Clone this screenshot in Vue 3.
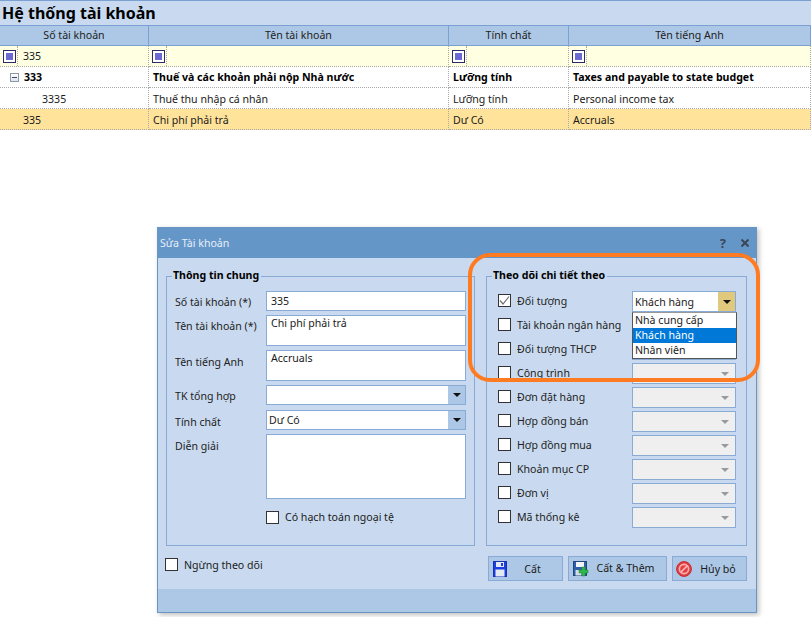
<template>
  <div class="page">
    <h1 class="page-title">Hệ thống tài khoản</h1>

    <div class="grid">
      <div v-for="col in columns" :key="col" class="head-cell">{{ col }}</div>

      <template v-for="(val, i) in filterRow" :key="'f' + i">
        <div class="cell filter-cell">
          <span class="filter-box"><span class="filter-dot"></span></span>
          <span class="filter-val">{{ val }}</span>
        </div>
      </template>

      <template v-for="row in rows" :key="row.code">
        <div class="cell" :class="row.cls">
          <span v-if="row.tree" class="tree-toggle"></span>
          <span :class="row.codeCls">{{ row.code }}</span>
        </div>
        <div class="cell" :class="row.cls">{{ row.name }}</div>
        <div class="cell" :class="row.cls">{{ row.kind }}</div>
        <div class="cell" :class="row.cls">{{ row.english }}</div>
      </template>
    </div>

    <div class="dialog">
      <div class="dialog-title">
        <span>Sửa Tài khoản</span>
        <span class="title-btns">
          <b>?</b>
          <svg width="8" height="8" viewBox="0 0 8 8">
            <path d="M0.5 0.5 L7.5 7.5 M7.5 0.5 L0.5 7.5" stroke="#3c4654" stroke-width="2" />
          </svg>
        </span>
      </div>

      <div class="dialog-body">
        <div class="groups">
          <fieldset class="group left">
            <legend>Thông tin chung</legend>
            <div class="form">
              <label class="h21">Số tài khoản (*)</label>
              <div class="input h21 val-mid">335</div>

              <label class="h31">Tên tài khoản (*)</label>
              <div class="input h31">Chi phí phải trả</div>

              <label class="h31 lbl-mid">Tên tiếng Anh</label>
              <div class="input h31">Accruals</div>

              <label class="h21 extra">TK tổng hợp</label>
              <div class="input h21 combo extra">
                <span></span>
                <span class="arrow-btn"><i class="arrow"></i></span>
              </div>

              <label class="h21 lbl-low">Tính chất</label>
              <div class="input h21 combo">
                <span>Dư Có</span>
                <span class="arrow-btn"><i class="arrow"></i></span>
              </div>

              <label class="h65 lbl-low">Diễn giải</label>
              <div class="input h65"></div>
            </div>
            <div class="foreign-check">
              <span class="check"></span>
              <span>Có hạch toán ngoại tệ</span>
            </div>
          </fieldset>

          <fieldset class="group right">
            <legend>Theo dõi chi tiết theo</legend>
            <div class="track-list">
              <div v-for="(t, i) in tracking" :key="t" class="track-row">
                <span class="check">
                  <svg v-if="i === 0" width="11" height="11" viewBox="0 0 11 11">
                    <path d="M1 5.5 L4 9 L10 1.5" fill="none" stroke="#6f6f6f" stroke-width="1.2" />
                  </svg>
                </span>
                <span class="track-label">{{ t }}</span>
                <div v-if="i === 0" class="track-combo active">
                  <span>Khách hàng</span>
                  <span class="arrow-btn hot"><i class="arrow"></i></span>
                  <ul class="dropdown">
                    <li v-for="o in options" :key="o" :class="{ selected: o === 'Khách hàng' }">{{ o }}</li>
                  </ul>
                </div>
                <div v-else class="track-combo disabled">
                  <i class="arrow grey"></i>
                </div>
              </div>
            </div>
          </fieldset>
        </div>

        <div class="bottom">
          <div class="stop-check">
            <span class="check"></span>
            <span>Ngừng theo dõi</span>
          </div>
          <div class="buttons">
            <button class="btn save">
              <svg width="14" height="16" viewBox="0 0 14 16">
                <rect x="0.5" y="0.5" width="13" height="15" fill="#1c3fe0" stroke="#1a2fb0" />
                <rect x="3" y="1" width="8" height="5" fill="#e4e9f4" />
                <rect x="8" y="2" width="2" height="3" fill="#1c3fe0" />
                <rect x="2.5" y="8.5" width="9" height="7" fill="#e4e8f0" />
              </svg>
              <span>Cất</span>
            </button>
            <button class="btn save-add">
              <svg width="16" height="16" viewBox="0 0 16 16">
                <rect x="0.5" y="0.5" width="13" height="14" fill="#2f5fa8" stroke="#23467c" />
                <rect x="3" y="1" width="8" height="5" fill="#f2f4f8" />
                <rect x="2.5" y="9" width="6" height="5.5" fill="#d4dbe8" />
                <path d="M9 6 h3 v3 h3 v3 h-3 v3 h-3 v-3 h-3 v-3 h3 z" fill="#2fb84a" stroke="#1c8a34" stroke-width="0.5" />
              </svg>
              <span class="raised">Cất &amp; Thêm</span>
            </button>
            <button class="btn cancel">
              <svg width="16" height="16" viewBox="0 0 16 16">
                <circle cx="8" cy="8" r="7.4" fill="#e23f44" stroke="#c02c30" />
                <circle cx="8" cy="8" r="4.6" fill="none" stroke="#f9b0b0" stroke-width="1.6" />
                <path d="M4.8 11.2 L11.2 4.8" stroke="#f9b0b0" stroke-width="1.7" />
              </svg>
              <span>Hủy bỏ</span>
            </button>
          </div>
        </div>
      </div>

      <div class="dialog-footer"></div>
      <div class="highlight"></div>
    </div>
  </div>
</template>

<script setup>
const columns = ["Số tài khoản", "Tên tài khoản", "Tính chất", "Tên tiếng Anh"];
const filterRow = ["335", "", "", ""];

const rows = [
  {
    code: "333",
    name: "Thuế và các khoản phải nộp Nhà nước",
    kind: "Lưỡng tính",
    english: "Taxes and payable to state budget",
    cls: "bold",
    tree: true,
    codeCls: "code-top",
  },
  {
    code: "3335",
    name: "Thuế thu nhập cá nhân",
    kind: "Lưỡng tính",
    english: "Personal income tax",
    cls: "plain",
    codeCls: "code-child",
  },
  {
    code: "335",
    name: "Chi phí phải trả",
    kind: "Dư Có",
    english: "Accruals",
    cls: "picked",
    codeCls: "code-top",
  },
];

const tracking = [
  "Đối tượng",
  "Tài khoản ngân hàng",
  "Đối tượng THCP",
  "Công trình",
  "Đơn đặt hàng",
  "Hợp đồng bán",
  "Hợp đồng mua",
  "Khoản mục CP",
  "Đơn vị",
  "Mã thống kê",
];

const options = ["Nhà cung cấp", "Khách hàng", "Nhân viên"];
</script>

<style>
html,
body {
  margin: 0;
  background: #fff;
}
</style>

<style scoped>
.page {
  position: relative;
  width: 811px;
  height: 617px;
  overflow: hidden;
  background: #fff;
  font-family: "Noto Sans", "Liberation Sans", sans-serif;
  font-size: 10.6px;
  color: #1a1a1a;
}

.page-title {
  box-sizing: border-box;
  height: 25px;
  margin: 0;
  padding-left: 2px;
  border-top: 1px solid #7ba1d2;
  background: #c9daf0;
  font-size: 16px;
  line-height: 24px;
  font-weight: 700;
  color: #000;
}

.grid {
  display: grid;
  grid-template-columns: 149px 300px 120px 1fr;
  grid-auto-rows: 21px;
}

.head-cell {
  box-sizing: border-box;
  border-top: 1px solid #7ba1d2;
  border-bottom: 1px solid #7ba1d2;
  border-right: 1px solid #7ba1d2;
  background: #adc8e6;
  text-align: center;
  line-height: 19px;
  color: #222;
}

.cell {
  box-sizing: border-box;
  display: flex;
  align-items: center;
  padding-left: 4px;
  border-bottom: 1px dotted #aaa;
  border-right: 1px dotted #aaa;
  white-space: nowrap;
}

.filter-cell {
  padding-left: 0;
  background: #ffffe1;
}

.filter-box {
  box-sizing: border-box;
  display: flex;
  align-items: center;
  justify-content: center;
  flex: none;
  width: 13px;
  height: 13px;
  margin: 0 1px 0 3px;
  border: 1px solid #2c2c6c;
  background: #fff;
}

.filter-dot {
  width: 7px;
  height: 7px;
  background: #6a6ad2;
}

.filter-val {
  box-sizing: border-box;
  height: 100%;
  padding-left: 5px;
  line-height: 20px;
  border-left: 1px dotted #aaa;
}

.bold {
  font-weight: 700;
  color: #000;
}

.plain,
.picked {
  padding-top: 2px;
}

.picked {
  background: #ffe39b;
}

.tree-toggle {
  box-sizing: border-box;
  position: relative;
  width: 9px;
  height: 9px;
  margin: 0 5px 0 6px;
  border: 1px solid #8f98a8;
  background: linear-gradient(#fff, #dfe3ea);
}

.tree-toggle::after {
  content: "";
  position: absolute;
  left: 1px;
  right: 1px;
  top: 3px;
  height: 1px;
  background: #3a4a6a;
}

.code-top {
  padding-left: 0;
}

.cell.picked .code-top {
  padding-left: 19px;
}

.code-child {
  padding-left: 38px;
}

.dialog {
  position: absolute;
  left: 157px;
  top: 227px;
  box-sizing: border-box;
  display: flex;
  flex-direction: column;
  width: 600px;
  height: 386px;
  border: 1px solid #6a94c4;
  background: #c9daf0;
  box-shadow: 2px 2px 5px rgba(0, 0, 0, 0.25);
}

.dialog-title {
  box-sizing: border-box;
  display: flex;
  align-items: center;
  justify-content: space-between;
  height: 30px;
  padding: 0 7px 1px 2px;
  background: #6496c8;
  color: #e6eef8;
  flex: none;
}

.title-btns {
  display: flex;
  align-items: center;
  gap: 15px;
  color: #3c4654;
  font-size: 13px;
}

.dialog-body {
  flex: 1;
  padding: 11px 9px 0 8px;
}

.groups {
  display: flex;
  gap: 11px;
}

.group {
  box-sizing: border-box;
  height: 277px;
  min-width: 0;
  margin: 0;
  padding: 0;
  border: 1px solid #8aaad6;
}

.group legend {
  box-sizing: border-box;
  height: 15px;
  padding: 0 2px 2px 1px;
  font-weight: 700;
  color: #000;
  line-height: 12px;
}

.left legend {
  margin-left: 5px;
}

.right legend {
  margin-left: 5px;
}

.left {
  width: 309px;
}

.right {
  width: 261px;
}

.form {
  display: grid;
  grid-template-columns: 84px 200px;
  column-gap: 7px;
  row-gap: 4px;
  padding: 7px 0 0 8px;
}

.form label {
  box-sizing: border-box;
  padding-top: 4px;
  color: #222;
}

.form label.lbl-mid {
  padding-top: 5px;
}

.form label.lbl-low {
  padding-top: 5px;
}

.h21 {
  height: 20px;
}

.h31 {
  height: 31px;
}

.h65 {
  height: 65px;
}

.extra {
  margin-bottom: 1px;
}

.input {
  box-sizing: border-box;
  padding: 0 0 0 4px;
  border: 1px solid #8aaad6;
  background: #fff;
  line-height: 14px;
  color: #1a1a1a;
}

.val-mid {
  line-height: 18px;
}

.combo {
  display: flex;
  justify-content: space-between;
  padding: 0 0 0 2px;
  line-height: 19px;
}

.arrow-btn {
  display: flex;
  align-items: center;
  justify-content: center;
  width: 17px;
  background: #adc8e6;
}

.arrow-btn.hot {
  background: #e0c87c;
}

.arrow {
  width: 0;
  height: 0;
  border-left: 4px solid transparent;
  border-right: 4px solid transparent;
  border-top: 4px solid #111;
}

.arrow.grey {
  border-top-color: #9a9a9a;
  border-left-width: 4.5px;
  border-right-width: 4.5px;
}

.foreign-check {
  display: flex;
  align-items: center;
  gap: 6px;
  margin: 11px 0 0 99px;
}

.check {
  box-sizing: border-box;
  display: flex;
  align-items: center;
  justify-content: center;
  flex: none;
  width: 13px;
  height: 13px;
  border: 1px solid #333;
  background: #fff;
}

.track-list {
  display: flex;
  flex-direction: column;
  gap: 3px;
  padding: 7px 10px 0 11px;
}

.track-row {
  display: flex;
  align-items: center;
  height: 21px;
}

.track-row .check {
  margin-bottom: 2px;
}

.track-label {
  flex: 1;
  padding: 0 0 2px 6px;
  color: #222;
  white-space: nowrap;
}

.track-combo {
  box-sizing: border-box;
  position: relative;
  display: flex;
  flex: none;
  align-items: center;
  justify-content: flex-end;
  width: 104px;
  height: 21px;
  border: 1px solid #8aaad6;
}

.active {
  justify-content: space-between;
  padding-left: 2px;
  background: #fff;
}

.active .arrow-btn {
  align-self: stretch;
}

.disabled {
  padding-right: 6px;
  background: #efefef;
}

.dropdown {
  position: absolute;
  left: -1px;
  top: 20px;
  z-index: 2;
  box-sizing: border-box;
  width: 105px;
  height: 47px;
  margin: 0;
  padding: 0;
  list-style: none;
  border: 1px solid #555;
  border-top-color: #999;
  background: #fff;
}

.dropdown li {
  height: 15px;
  padding-left: 2px;
  line-height: 14px;
}

.dropdown .selected {
  background: #0078d7;
  color: #fff;
}

.bottom {
  display: flex;
  justify-content: space-between;
  padding-top: 10px;
}

.stop-check {
  display: flex;
  align-items: center;
  gap: 6px;
  height: 13px;
  margin: 2px 0 0 -1px;
}

.buttons {
  display: flex;
  gap: 5px;
}

.btn {
  box-sizing: border-box;
  display: flex;
  align-items: center;
  height: 25px;
  padding: 0 4px 0 4px;
  border: 1px solid #8aaad6;
  background: #adc8e6;
  font: inherit;
  color: #1a1a1a;
}

.btn svg {
  flex: none;
}

.btn span {
  flex: 1;
  text-align: center;
}

.btn .raised {
  padding-bottom: 2px;
}

.save {
  width: 75px;
}

.save-add {
  width: 99px;
}

.cancel {
  width: 75px;
  padding: 0 2px 0 3px;
}

.dialog-footer {
  flex: none;
  height: 23px;
  background: #adc8e6;
}

.highlight {
  position: absolute;
  left: 310px;
  top: 25px;
  box-sizing: border-box;
  width: 292px;
  height: 129px;
  border: 4px solid #ff7b22;
  border-radius: 22px;
  pointer-events: none;
}
</style>
